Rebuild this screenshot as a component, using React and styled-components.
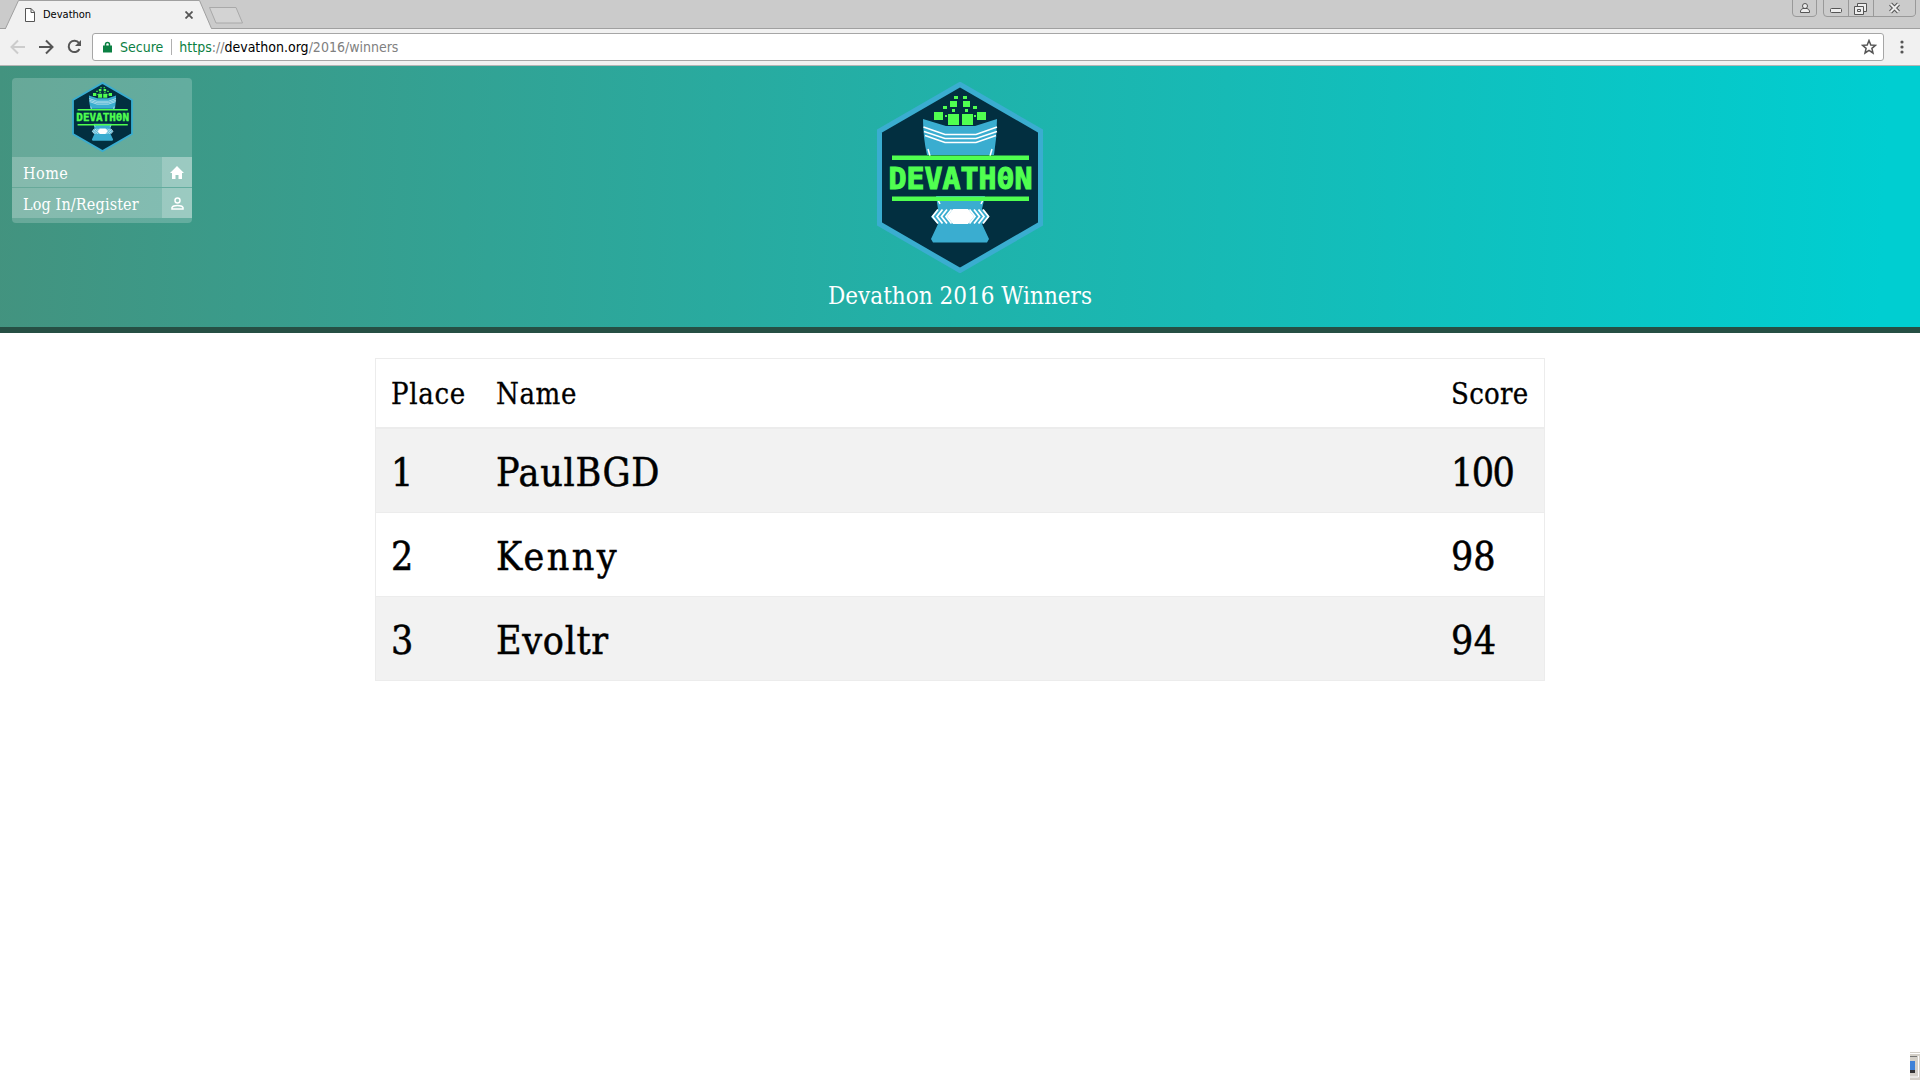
import React from 'react';
import styled, { createGlobalStyle } from 'styled-components';

const Global = createGlobalStyle`
  * { box-sizing: border-box; }
  html, body { margin: 0; height: 1080px; overflow: hidden; background: #fff; }
`;
const slab = `"Roboto Slab", "DejaVu Serif Condensed", "DejaVu Serif", serif`;
const tahoma = `Tahoma, "DejaVu Sans Condensed", "DejaVu Sans", sans-serif`;

const Screen = styled.div`
  position: relative;
  width: 1920px;
  height: 1080px;
  display: flex;
  flex-direction: column;
  overflow: hidden;
  font-family: ${slab};
`;
const TabStrip = styled.div`
  height: 29px;
  background: #cbcbcb;
  display: flex;
  justify-content: space-between;
  box-shadow: inset 0 -1px #a0a0a0;
`;
const Tab = styled.div`
  position: relative;
  width: 212px;
  height: 29px;
  display: flex;
  align-items: center;
  padding-left: 25px;
  font: 11px ${tahoma};
  color: #000;
`;
const TabShape = styled.svg`
  position: absolute;
  left: 0;
  top: 0;
`;
const TabTitle = styled.span`
  position: relative;
  width: 142px;
  margin-left: 8px;
`;
const Front = styled.svg`
  position: relative;
  flex: none;
`;
const Controls = styled.div`
  display: flex;
  padding-right: 4px;
`;
const Toolbar = styled.div`
  height: 37px;
  background: #f1f1f1;
  border-bottom: 1px solid #b5b5b5;
  display: flex;
  align-items: center;
  padding: 0 9px 0 10px;
`;
const NavIcons = styled.svg`flex: none;`;
const Address = styled.div`
  width: 1792px;
  height: 28px;
  background: #fff;
  border: 1px solid #a6a6a6;
  border-radius: 3px;
  display: flex;
  align-items: center;
  font: 14px ${tahoma};
  padding: 0 6px 0 10px;
`;
const Word = styled.span`
  color: ${p => p.$c};
  margin-left: ${p => p.$ml || 0}px;
  white-space: nowrap;
`;
const Rule = styled.i`
  width: 1px;
  height: 16px;
  margin: 0 7px 0 8px;
  background: #b0b0b0;
`;
const Push = styled.div`
  margin-left: auto;
  display: flex;
`;
const Hero = styled.header`
  height: 267px;
  padding: 12px;
  display: grid;
  grid-template-columns: 180px 1fr 180px;
  align-items: start;
  background: linear-gradient(92deg, #43937f 0%, #20b2aa 50%, #00ced1 98%);
  border-bottom: 6px solid #264f44;
`;
const Menu = styled.nav`
  height: 145px;
  border-radius: 4px;
  background: rgba(255,255,255,.2);
  display: flex;
  flex-direction: column;
`;
const MenuLogo = styled.div`
  height: 79px;
  padding-top: 4px;
  display: flex;
  justify-content: center;
`;
const MenuItem = styled.a`
  height: 30px;
  margin-bottom: 1px;
  display: flex;
  justify-content: space-between;
  align-items: center;
  background: rgba(255,255,255,.2);
  padding-left: 11px;
  color: #fff;
  font-size: 16px;
`;
const IconCell = styled.span`
  width: 30px;
  height: 30px;
  display: grid;
  place-items: center;
  background: rgba(255,255,255,.2);
`;
const Brand = styled.div`
  display: flex;
  flex-direction: column;
  align-items: center;
  padding-top: 4px;
`;
const Title = styled.h1`
  margin: 4px 0 0;
  font-size: 24px;
  font-weight: 400;
  line-height: 38px;
  color: #fff;
`;
const Fit = styled.span`
  letter-spacing: ${p => p.$ls || 0}px;
  padding-top: ${p => p.$drop || 0}px;
  white-space: nowrap;
`;
const Table = styled.main`
  width: 1170px;
  margin: 25px 0 0 375px;
  border: 1px solid #ececec;
  border-bottom: 0;
`;
const Row = styled.div`
  display: grid;
  grid-template-columns: 105px 955px 1fr;
  align-items: center;
  padding-left: 15px;
  height: ${p => p.$head ? 70 : 84}px;
  border-bottom: ${p => p.$head ? 2 : 1}px solid #ececec;
  background: ${p => p.$odd ? '#f2f2f2' : '#fff'};
  font-size: ${p => p.$head ? 29 : 39}px;
  -webkit-text-stroke: ${p => p.$head ? 0.3 : 0.5}px #000;
  color: #000;
`;
const Corner = styled.svg`
  position: absolute;
  right: 0;
  bottom: 0;
`;

const Logo = ({ w, h }) => (
  <svg width={w} height={h} viewBox="0 0 166 191">
    <path d="M83 2.500 163.500 49V142L83 188.500 2.500 142V49Z" fill="#022f40" stroke="#3aadd0" strokeWidth="5" />
    <path d="M46 37 69 44H98L120 37Q120 55 117 73H50Q46 55 46 37Z" fill="#3aadd0" />
    <path d="M46.500 45 68 52.500H99L120 45M47 49.500 68 56.500H99L120 49.500M48 53.500 68 60.500H99L119 53.500" fill="none" stroke="#fff" strokeWidth="1.500" />
    <path d="M51 67 53 74M115 67 113 74" stroke="#fff" strokeWidth="1.500" />
    <path d="M59 114H108L105 127 112 135 105 142 112 157 110 160.500H56L54 157 61 142 54 135 61 127Z" fill="#3aadd0" />
    <path d="M61 118 63 122M106 118 104 122" stroke="#fff" strokeWidth="1.500" />
    <path d="M76 127H91L97 134.500 91 142H76L70 134.500Z" fill="#fff" />
    <path d="M61 127.500 55.500 134.500 61 141.500M65.500 127.500 60 134.500 65.500 141.500M70 127.500 64.500 134.500 70 141.500M74.500 127.500 69 134.500 74.500 141.500M106 127.500 111.500 134.500 106 141.500M101.500 127.500 107 134.500 101.500 141.500M97 127.500 102.500 134.500 97 141.500M92.500 127.500 98 134.500 92.500 141.500" fill="none" stroke="#fff" strokeWidth="1.800" />
    <path fill="#50ff50" d="M15 73.500H152V78H15ZM15 114.500H152V119H15ZM57 30h9v8h-9zM100 30h9v8h-9zM71 32h11v11H71zM85 32h11v11H85zM73 19h7v6h-7zM86 19h7v6h-7zM77 14h4v3h-4zM86 14h4v3h-4zM66 24h4v3h-4zM96 24h4v3h-4zM75 27h3v3h-3zM88 27h3v3h-3zM68 33h2v2h-2zM97 33h2v2h-2z" />
    <text x="11.500" y="106.700" textLength="144" lengthAdjust="spacingAndGlyphs" fontFamily="DejaVu Sans Mono" fontWeight="700" fontSize="29.500" fill="#50ff50" stroke="#50ff50" strokeWidth="1.100">DEVATH0N</text>
  </svg>
);

const columns = [
  { title: 'Place', spacing: 0.7 },
  { title: 'Name', spacing: 0.6 },
  { title: 'Score', spacing: 0.3 },
];
const winners = [
  [['1', 0], ['PaulBGD', 0.7], ['100', -1.6]],
  [['2', 0], ['Kenny', 2.4], ['98', 0]],
  [['3', 0], ['Evoltr', 0.7], ['94', 0.5]],
];

export default function App() {
  return (
    <>
      <Global />
      <Screen>
        <TabStrip>
          <Tab>
            <TabShape width="250" height="29">
              <path d="M5.500 28.500 18.500 .5H199.500L211.500 28.500V30H5Z" fill="#f1f1f1" stroke="#a0a0a0" />
              <path d="M0 28.500H6" stroke="#a0a0a0" />
              <path d="M209.500 7.500H236L242.500 23H216Z" fill="#d3d3d3" stroke="#a9a9a9" />
            </TabShape>
            <Front width="10" height="14"><path d="M.5.5H6L9.500 4V13.500H.5ZM6 .5V4.500H9.500" fill="#fff" stroke="#555" /></Front>
            <TabTitle>Devathon</TabTitle>
            <Front width="8" height="8"><path d="M.5.5 7.500 7.500M7.500.5.5 7.500" stroke="#555" strokeWidth="1.800" /></Front>
          </Tab>
          <Controls>
            <svg width="124" height="18" fill="none">
              <path d="M.5 0V13Q.5 16.500 4 16.500H20Q24.500 16.500 24.500 13V0M31.500 0V13Q31.500 16.500 35 16.500H119Q123.500 16.500 123.500 13V0M56.500 0V16M81.500 0V16" stroke="#999" />
              <g stroke="#555" fill="#eee"><circle cx="13" cy="6" r="2.500" /><path d="M8.500 12.500V11Q9 9 11 8.500H15Q17 9 17.500 11V12.500Z" /><rect x="38.500" y="8.500" width="11" height="4" rx="1" /><path d="M65.500 3.500H74.500V11.500H65.500Z" /><path d="M62.500 6.500H71.500V14.500H62.500ZM65.500 9.500H68.500V11.500H65.500Z" /></g>
              <path d="M98.500 4 106.500 12M106.500 4 98.500 12" stroke="#555" strokeWidth="4" /><path d="M98.500 4 106.500 12M106.500 4 98.500 12" stroke="#eee" strokeWidth="2" />
            </svg>
          </Controls>
        </TabStrip>
        <Toolbar>
          <NavIcons width="82" height="24" fill="none" strokeWidth="2">
            <path d="M15 12H2M8 5.500 1.500 12 8 18.500" stroke="#ccc" />
            <path d="M29 12H42M36 5.500 42.500 12 36 18.500" stroke="#555" />
            <path d="M69 8A5.700 5.700 0 1 0 69.500 14" stroke="#555" /><path d="M71 5V11H65Z" fill="#555" />
          </NavIcons>
          <Address>
            <svg width="9" height="12"><path d="M2.500 5V3.500A2 2 0 0 1 6.500 3.500V5" fill="none" stroke="#0b8043" strokeWidth="1.500" /><path d="M0 4.500H9V11.500H0Z" fill="#0b8043" /></svg>
            <Word $c="#0b8043" $ml={8}>Secure</Word>
            <Rule />
            <Word $c="#0b8043">https</Word><Word $c="#808080">://</Word><Word $c="#000">devathon.org</Word><Word $c="#808080">/2016/winners</Word>
            <Push><svg width="16" height="16"><path d="M8 1.500 9.800 6 14.500 6.300 10.900 9.300 12 14 8 11.400 4 14 5.100 9.300 1.500 6.300 6.200 6Z" fill="none" stroke="#555" strokeWidth="1.500" /></svg></Push>
          </Address>
          <Push><svg width="18" height="16" fill="#555"><circle cx="9" cy="3" r="1.600" /><circle cx="9" cy="8" r="1.600" /><circle cx="9" cy="13" r="1.600" /></svg></Push>
        </Toolbar>
        <Hero>
          <Menu>
            <MenuLogo><Logo w={61} h={70} /></MenuLogo>
            <MenuItem><Fit $ls={0.5} $drop={3}>Home</Fit><IconCell><svg width="14" height="13" fill="#fff"><path d="M7 0 14 7H12V13H8.500V9H5.500V13H2V7H0Z" /></svg></IconCell></MenuItem>
            <MenuItem><Fit $ls={0.15} $drop={3}>Log In/Register</Fit><IconCell><svg width="13" height="13" fill="none" stroke="#fff" strokeWidth="1.500"><circle cx="6.500" cy="3.500" r="2.500" /><path d="M1 12V10.500Q2 8.500 6.500 8.500T12 10.500V12Z" /></svg></IconCell></MenuItem>
          </Menu>
          <Brand>
            <Logo w={166} h={191} />
            <Title>Devathon 2016 Winners</Title>
          </Brand>
        </Hero>
        <Table>
          <Row $head>
            {columns.map(c => <Fit key={c.title} $ls={c.spacing} $drop={2}>{c.title}</Fit>)}
          </Row>
          {winners.map((cells, i) => (
            <Row key={i} $odd={i % 2 === 0}>
              {cells.map(([text, spacing]) => <Fit key={text} $ls={spacing} $drop={4}>{text}</Fit>)}
            </Row>
          ))}
        </Table>
        <Corner width="10" height="28"><path d="M0 0H10V28H0Z" fill="#d4d0c8" /><path d="M0 1.500H10M8.500 4V25H0" stroke="#fff" fill="none" /><path d="M0 4H7V5H0Z" fill="#777" /><path d="M0 9H5V21H0Z" fill="#3f82d8" /><path d="M0 18H5V21H0Z" fill="#333" /></Corner>
      </Screen>
    </>
  );
}
